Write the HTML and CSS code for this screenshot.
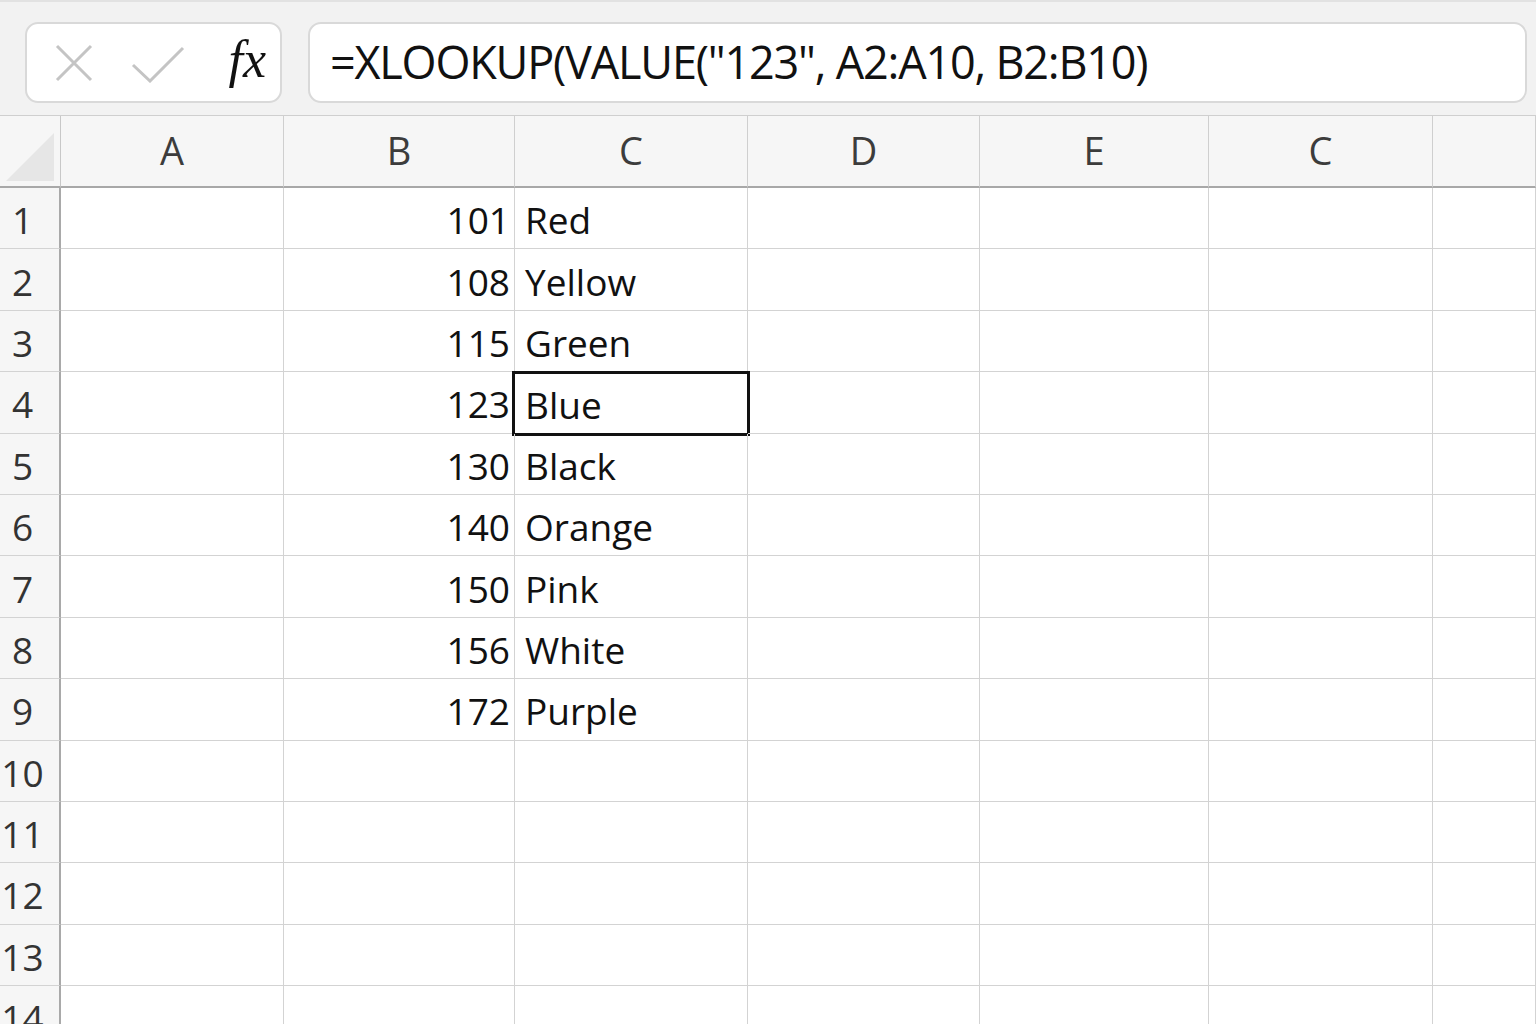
FILE: index.html
```html
<!DOCTYPE html>
<html lang="en">
<head>
    <meta charset="UTF-8">
    <title>Sheet</title>
    <link rel="stylesheet" href="styles.css">
</head>
<body>
<!-- formula bar -->
<div class="toolbar">
    <div class="buttons">
        <svg class="icon" width="40" height="40" viewBox="0 0 40 40">
            <path d="M3 3 L37 37 M37 3 L3 37" stroke="#c4c4c4" stroke-width="3" fill="none"/>
        </svg>
        <svg class="icon" width="56" height="40" viewBox="0 0 56 40">
            <path d="M3 22 L20 38 L53 5" stroke="#c4c4c4" stroke-width="3" fill="none"/>
        </svg>
        <span class="fx">fx</span>
    </div>
    <div class="formula">=XLOOKUP(VALUE("123", A2:A10, B2:B10)</div>
</div>

<!-- grid -->
<div class="sheet">
    <div class="corner"><span class="tri"></span></div>
    <div class="colhead">A</div>
    <div class="colhead">B</div>
    <div class="colhead">C</div>
    <div class="colhead">D</div>
    <div class="colhead">E</div>
    <div class="colhead">C</div>
    <div class="colhead"></div>

    <div class="rowhead">1</div><div class="cell"></div><div class="cell num">101</div><div class="cell">Red</div><div class="cell"></div><div class="cell"></div><div class="cell"></div><div class="cell"></div>
    <div class="rowhead">2</div><div class="cell"></div><div class="cell num">108</div><div class="cell">Yellow</div><div class="cell"></div><div class="cell"></div><div class="cell"></div><div class="cell"></div>
    <div class="rowhead">3</div><div class="cell"></div><div class="cell num">115</div><div class="cell">Green</div><div class="cell"></div><div class="cell"></div><div class="cell"></div><div class="cell"></div>
    <div class="rowhead">4</div><div class="cell"></div><div class="cell num">123</div><div class="cell selected">Blue</div><div class="cell"></div><div class="cell"></div><div class="cell"></div><div class="cell"></div>
    <div class="rowhead">5</div><div class="cell"></div><div class="cell num">130</div><div class="cell">Black</div><div class="cell"></div><div class="cell"></div><div class="cell"></div><div class="cell"></div>
    <div class="rowhead">6</div><div class="cell"></div><div class="cell num">140</div><div class="cell">Orange</div><div class="cell"></div><div class="cell"></div><div class="cell"></div><div class="cell"></div>
    <div class="rowhead">7</div><div class="cell"></div><div class="cell num">150</div><div class="cell">Pink</div><div class="cell"></div><div class="cell"></div><div class="cell"></div><div class="cell"></div>
    <div class="rowhead">8</div><div class="cell"></div><div class="cell num">156</div><div class="cell">White</div><div class="cell"></div><div class="cell"></div><div class="cell"></div><div class="cell"></div>
    <div class="rowhead">9</div><div class="cell"></div><div class="cell num">172</div><div class="cell">Purple</div><div class="cell"></div><div class="cell"></div><div class="cell"></div><div class="cell"></div>
    <div class="rowhead">10</div><div class="cell"></div><div class="cell"></div><div class="cell"></div><div class="cell"></div><div class="cell"></div><div class="cell"></div><div class="cell"></div>
    <div class="rowhead">11</div><div class="cell"></div><div class="cell"></div><div class="cell"></div><div class="cell"></div><div class="cell"></div><div class="cell"></div><div class="cell"></div>
    <div class="rowhead">12</div><div class="cell"></div><div class="cell"></div><div class="cell"></div><div class="cell"></div><div class="cell"></div><div class="cell"></div><div class="cell"></div>
    <div class="rowhead">13</div><div class="cell"></div><div class="cell"></div><div class="cell"></div><div class="cell"></div><div class="cell"></div><div class="cell"></div><div class="cell"></div>
    <div class="rowhead">14</div><div class="cell"></div><div class="cell"></div><div class="cell"></div><div class="cell"></div><div class="cell"></div><div class="cell"></div><div class="cell"></div>
</div>
</body>
</html>
```

FILE: styles.css
```css
* {
    margin: 0;
    padding: 0;
    box-sizing: border-box;
}

body {
    width: 1536px;
    height: 1024px;
    overflow: hidden;
    background-color: #fff;
    font-family: "Open Sans", "Noto Sans", sans-serif;
    color: #111;
}

/* formula bar */
.toolbar {
    height: 116px;
    background-color: #f2f2f2;
    border-top: 2px solid #e2e2e2;
    border-bottom: 1px solid #cfcfcf;
    padding: 20px 9px 0 25px;
    display: flex;
    gap: 26px;
}

.buttons,
.formula {
    height: 81px;
    background-color: #fff;
    border: 2px solid #d9d9d9;
    border-radius: 13px;
}

.buttons {
    width: 257px;
    display: flex;
    align-items: center;
    padding: 0 14px 0 27px;
}

.buttons .icon + .icon {
    margin-left: 36px;
}

.fx {
    margin-left: auto;
    font-family: "Liberation Serif", serif;
    font-style: italic;
    font-size: 52px;
    color: #111;
    line-height: 1;
    padding-bottom: 6px;
}

.formula {
    flex: 1;
    display: flex;
    align-items: center;
    padding-left: 20px;
    padding-bottom: 2px;
    font-size: 45px;
    letter-spacing: -1.2px;
    color: #111;
}

/* grid */
.sheet {
    display: grid;
    grid-template-columns: 61px 223px 231px 233px 232px 229px 224px 1fr;
    grid-template-rows: 72px repeat(14, 61.4px);
}

.corner {
    background-color: #f6f6f6;
    border-right: 1px solid #c8c8c8;
    border-bottom: 2px solid #a8a8a8;
    position: relative;
}

.tri {
    position: absolute;
    right: 6px;
    bottom: 5px;
    width: 0;
    height: 0;
    border-left: 48px solid transparent;
    border-bottom: 48px solid #e6e6e6;
}

.colhead {
    background-color: #f6f6f6;
    border-right: 1px solid #cfcfcf;
    border-bottom: 2px solid #a8a8a8;
    display: flex;
    align-items: center;
    justify-content: center;
    font-size: 38px;
    color: #3c3c3c;
    padding-bottom: 2px;
}

.rowhead {
    background-color: #f6f6f6;
    border-right: 2px solid #a9a9a9;
    border-bottom: 1px solid #d3d3d3;
    display: flex;
    align-items: center;
    justify-content: center;
    padding: 3px 14px 0 0;
    font-size: 37px;
    color: #333;
}

.cell {
    border-right: 1px solid #d3d3d3;
    border-bottom: 1px solid #d3d3d3;
    display: flex;
    align-items: center;
    padding: 3px 10px 0;
    font-size: 37px;
    color: #111;
    white-space: nowrap;
}

.num {
    justify-content: flex-end;
    padding-right: 4px;
}

.selected {
    border: 3px solid #111;
    margin: -1px -2px -2px -3px;
    padding-left: 10px;
}
```
